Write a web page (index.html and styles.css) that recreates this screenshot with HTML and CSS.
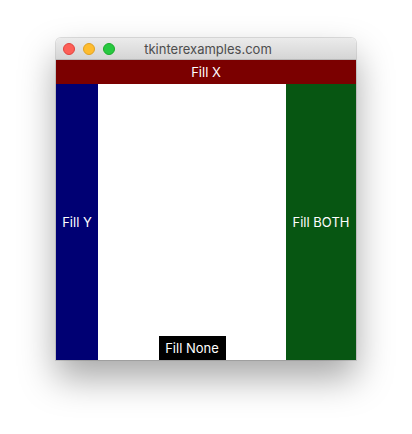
FILE: index.html
```html
<!DOCTYPE html>
<html>
<head>
<meta charset="utf-8">
<link rel="stylesheet" href="styles.css">
</head>
<body>
<div class="window">
  <div class="titlebar">
    <div class="lights">
      <span class="light red"></span>
      <span class="light yellow"></span>
      <span class="light green"></span>
    </div>
    <div class="title">tkinterexamples.com</div>
  </div>
  <div class="fillx">Fill X</div>
  <div class="main">
    <div class="filly">Fill Y</div>
    <div class="center"><div class="fillnone">Fill None</div></div>
    <div class="fillboth">Fill BOTH</div>
  </div>
</div>
</body>
</html>
```
FILE: styles.css
```css
html, body { margin: 0; padding: 0; background: #fff; }
body {
  width: 412px; height: 434px; overflow: hidden;
  padding: 38px 0 0 56px; box-sizing: border-box;
  font-family: "Inter", "Open Sans", "Liberation Sans", sans-serif;
}
.window {
  width: 300px;
  border-radius: 5px 5px 0 0;
  box-shadow: 0 0 0 1px rgba(0,0,0,0.12), 0 18px 36px rgba(0,0,0,0.35);
  overflow: hidden;
}
.titlebar {
  height: 21px;
  background: linear-gradient(#ebebeb, #d5d5d5);
  position: relative;
  display: flex; align-items: center; justify-content: center;
  border-bottom: 1px solid #b9b9b9;
}
.lights { position: absolute; left: 7px; top: 5px; display: flex; gap: 8px; }
.light { width: 12px; height: 12px; border-radius: 50%; box-sizing: border-box; }
.red { background: #fd5f57; border: 0.5px solid #e0443e; }
.yellow { background: #febc2e; border: 0.5px solid #dea123; }
.green { background: #27c840; border: 0.5px solid #1aab29; }
.title { font-size: 13px; color: #4d4d4d; padding-left: 4px; }
.fillx, .filly, .fillnone, .fillboth { font-size: 13px; color: #fff; }
.fillx {
  height: 24px; background: #7b0000;
  display: flex; align-items: center; justify-content: center;
}
.main { display: flex; height: 276px; }
.filly {
  width: 42px; background: #000073;
  display: flex; align-items: center; justify-content: center;
}
.center { flex: 1; background: #fff; display: flex; justify-content: center; align-items: flex-end; }
.fillnone {
  width: 67px; height: 24px; background: #000;
  display: flex; align-items: center; justify-content: center;
}
.fillboth {
  width: 70px; background: #075612;
  display: flex; align-items: center; justify-content: center;
}
```
